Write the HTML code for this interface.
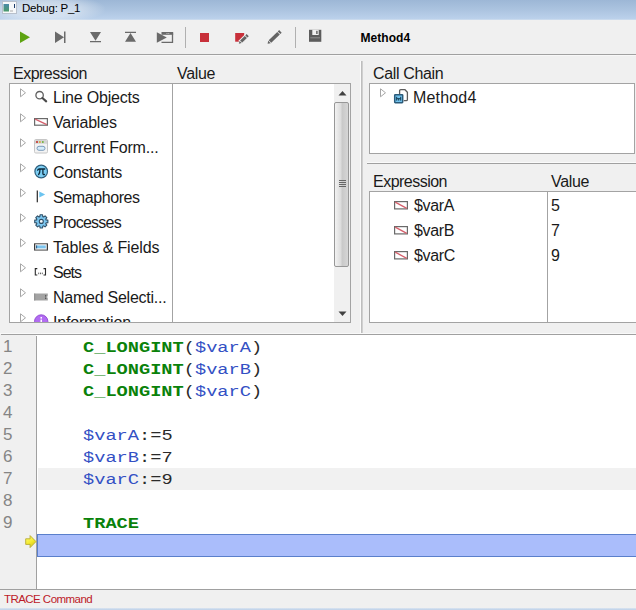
<!DOCTYPE html>
<html><head><meta charset="utf-8">
<style>
*{box-sizing:border-box;margin:0;padding:0}
html,body{width:636px;height:610px;overflow:hidden;background:#f0f0f0;font-family:"Liberation Sans",sans-serif;color:#1a1a1a}
.abs{position:absolute}
#title{left:0;top:0;width:636px;height:20px;background:linear-gradient(#9db7d6,#acc4e0 50%,#bbd1eb 94%,#d4e0ee)}
#title .t{left:22px;top:2px;font-size:11.500px;letter-spacing:-0.250px;color:#000}
#tb{left:0;top:20px;width:636px;height:34px;background:#f0f0f0}
.lbl{font-size:16px;letter-spacing:-0.350px;color:#1a1a1a;white-space:nowrap;line-height:18px}
.box{background:#fff;border:1px solid #a3a3a3}
.row{position:absolute;left:0;height:25px;font-size:16px;letter-spacing:-0.200px;white-space:nowrap;width:162px}
.row .tx{position:absolute;left:43px;top:5px;line-height:18px}
.tri{position:absolute;left:10px;top:4px}
.ic{position:absolute}
.code{font-family:"Liberation Mono",monospace;font-size:18.670px;white-space:pre;position:absolute;left:83px;height:22px;line-height:22px;color:#2a2a2a;transform:scaleY(0.82);transform-origin:0 16px}
.ln{font-size:17px;position:absolute;left:3px;color:#858585;height:22px;line-height:22px}
.k{color:#0a820a;font-weight:bold}
.v{color:#3350c4}
</style></head><body>
<div class="abs" id="title" style="overflow:hidden">
  <div class="abs" style="left:-20px;top:-6px;width:125px;height:30px;background:radial-gradient(ellipse at center,rgba(255,255,255,0.550) 0%,rgba(255,255,255,0.400) 40%,rgba(255,255,255,0) 72%)"></div>
  <svg class="abs" style="left:2px;top:1px" width="15" height="13" viewBox="0 0 15 13"><defs><linearGradient id="tg" x1="0" y1="0" x2="0" y2="1"><stop offset="0" stop-color="#4a8aa8"/><stop offset="1" stop-color="#4a9a6a"/></linearGradient></defs><rect x="0.500" y="0.500" width="14" height="12" fill="#f6f8fa" stroke="#b8c0cc"/><rect x="1.500" y="3" width="5.500" height="7.500" fill="url(#tg)"/><rect x="8" y="9.500" width="3" height="1" fill="#aaa"/><rect x="12" y="3" width="1" height="4" fill="#1a3a6a"/></svg>
  <div class="abs t">Debug: P_1</div>
</div>
<div class="abs" id="tb">
  <svg class="abs" style="left:0;top:-1px" width="636" height="35" viewBox="0 19 636 35">
    <path d="M20 31.500 L30 37.200 L20 43 Z" fill="#5ea311"/>
    <path d="M55 31.500 L64 37.200 L55 43 Z M64 31.500h1.500v11.500h-1.500z" fill="#6a6a6a"/>
    <path d="M90 32 h11 l-5.500 8.700z M90 41h11v1.200h-11z" fill="#6a6a6a"/>
    <path d="M125 31.800h11v1.200h-11z M125 41.700h11l-5.500 -8.800z" fill="#6a6a6a"/>
    <path d="M161.500 42.400h11v-9" fill="none" stroke="#6a6a6a" stroke-width="1.300"/>
    <rect x="161.500" y="32" width="11.700" height="2.800" fill="#6a6a6a"/><rect x="166.500" y="33" width="1" height="0.800" fill="#ddd"/><rect x="168.300" y="33" width="1" height="0.800" fill="#ddd"/>
    <path d="M156.800 32.200 L166.800 37.400 L156.800 42.700 Z" fill="#6a6a6a"/>
    <rect x="185" y="27" width="1" height="21" fill="#b0b0b0"/>
    <rect x="200" y="33" width="9" height="9" fill="#c8303a"/>
    <rect x="235.200" y="33" width="9" height="8.700" fill="#c8303a"/>
    <g transform="translate(238.8,43.8) rotate(-44)"><path d="M-0.500 0 L2.600 -2.45 H13.200000000000001 V2.45 H2.600 Z" fill="#f0f0f0"/><path d="M0 0 L2.600 -1.55 L2.600 1.55 Z M3.300 -1.55 H9.8 V1.55 H3.300 Z M10.5 -1.55 H12.4 V1.55 H10.5 Z" fill="#646464"/></g>
    <g transform="translate(267.6,43.8) rotate(-44)"><path d="M0 0 L2.600 -1.85 L2.600 1.85 Z M3.300 -1.85 H15.200000000000001 V1.85 H3.300 Z M15.9 -1.85 H17.8 V1.85 H15.9 Z" fill="#646464"/></g>
    <rect x="295" y="27" width="1" height="21" fill="#b0b0b0"/>
    <path d="M309 29.800h12.300v12h-12.300z" fill="#5c5c5c"/>
    <rect x="312.300" y="29.800" width="6.400" height="5.200" fill="#f0f0f0"/>
    <rect x="316.200" y="30.800" width="1.400" height="3.200" fill="#5c5c5c"/>
    <rect x="310.300" y="37.300" width="9.700" height="1" fill="#8e8e8e"/>
  </svg>
  <div class="abs" style="left:360.500px;top:11px;font-size:12px;font-weight:bold;color:#000;letter-spacing:0.050px">Method4</div>
</div>
<div class="abs" style="left:0;top:54px;width:636px;height:1px;background:#a0a0a0"></div>
<div class="abs" style="left:0;top:55px;width:636px;height:1px;background:#f8f8f8"></div>

<!-- left panel -->
<div class="abs lbl" style="left:13px;top:65px;letter-spacing:-0.520px">Expression</div>
<div class="abs lbl" style="left:177px;top:65px">Value</div>
<div class="abs box" style="left:9px;top:83px;width:342px;height:240px;overflow:hidden">
  <div class="abs" style="left:162px;top:0;width:1px;height:240px;background:#a3a3a3"></div>
  <div class="row" style="top:0px"><svg class="tri" width="7" height="10" viewBox="0 0 7 10"><path d="M0.500 0.800 L5.500 4.800 L0.500 8.800Z" fill="#fff" stroke="#a6a6a6" stroke-width="1"/></svg><svg class="ic" style="left:24px;top:5.5px" width="14" height="14" viewBox="0 0 14 14"><circle cx="5.600" cy="5.200" r="3.700" fill="#fff" stroke="#606060" stroke-width="1.300"/><path d="M8.400 8 L12.200 11.400" stroke="#4a4a4a" stroke-width="2.100" stroke-linecap="round"/></svg><span class="tx" style="letter-spacing:-0.2px">Line Objects</span></div>
  <div class="row" style="top:25px"><svg class="tri" width="7" height="10" viewBox="0 0 7 10"><path d="M0.500 0.800 L5.500 4.800 L0.500 8.800Z" fill="#fff" stroke="#a6a6a6" stroke-width="1"/></svg><svg class="ic" style="left:24px;top:9px" width="14" height="8" viewBox="0 0 14 8"><rect x="0.600" y="0.600" width="12.800" height="6.600" fill="#fff" stroke="#6a6a6a" stroke-width="1.200"/><path d="M1.200 1.200 L12.800 6.600" stroke="#d4606c" stroke-width="1.300"/></svg><span class="tx" style="letter-spacing:-0.2px">Variables</span></div>
  <div class="row" style="top:50px"><svg class="tri" width="7" height="10" viewBox="0 0 7 10"><path d="M0.500 0.800 L5.500 4.800 L0.500 8.800Z" fill="#fff" stroke="#a6a6a6" stroke-width="1"/></svg><svg class="ic" style="left:24px;top:5px" width="14" height="15" viewBox="0 0 14 15"><rect x="0.500" y="0.500" width="13" height="13.500" rx="1.300" fill="#f3f3f3" stroke="#c6c6c6"/><path d="M1 4.800v-2.800q0 -1 1 -1h10q1 0 1 1v2.800z" fill="#d4d4d4"/><circle cx="3" cy="3" r="1" fill="#c42a22"/><circle cx="5.900" cy="3" r="1" fill="#d6a63a"/><circle cx="8.800" cy="3" r="1" fill="#72b23c"/><rect x="3" y="7.300" width="8" height="4" rx="2" fill="#d6ecf9" stroke="#7b9bbb" stroke-width="1"/></svg><span class="tx" style="letter-spacing:-0.2px">Current Form...</span></div>
  <div class="row" style="top:75px"><svg class="tri" width="7" height="10" viewBox="0 0 7 10"><path d="M0.500 0.800 L5.500 4.800 L0.500 8.800Z" fill="#fff" stroke="#a6a6a6" stroke-width="1"/></svg><svg class="ic" style="left:24px;top:5px" width="15" height="15" viewBox="0 0 15 15"><circle cx="7.200" cy="7.500" r="6.300" fill="#7ccef4" stroke="#2f5f7d" stroke-width="1.200"/><path d="M3.600 6.200q0.500 -1.200 1.600 -1.200h5.600M6 5.200q0 3.600 -1.400 5.400M8.900 5.200v4.300q0 1.300 1.500 1" fill="none" stroke="#0c2a3c" stroke-width="1.300" stroke-linecap="round"/></svg><span class="tx" style="letter-spacing:-0.35px">Constants</span></div>
  <div class="row" style="top:100px"><svg class="tri" width="7" height="10" viewBox="0 0 7 10"><path d="M0.500 0.800 L5.500 4.800 L0.500 8.800Z" fill="#fff" stroke="#a6a6a6" stroke-width="1"/></svg><svg class="ic" style="left:26px;top:6px" width="10" height="13" viewBox="0 0 10 13"><rect x="0.700" y="0.500" width="1.200" height="11.800" fill="#2a2a2a"/><path d="M3.300 1.600 L9.200 4.500 L3.300 7.400 Z" fill="#6cc4f0"/></svg><span class="tx" style="letter-spacing:-0.4px">Semaphores</span></div>
  <div class="row" style="top:125px"><svg class="tri" width="7" height="10" viewBox="0 0 7 10"><path d="M0.500 0.800 L5.500 4.800 L0.500 8.800Z" fill="#fff" stroke="#a6a6a6" stroke-width="1"/></svg><svg class="ic" style="left:24px;top:5px" width="15" height="15" viewBox="0 0 15 15"><g transform="translate(7.300,7.400)"><path d="M4.78 -1.46 L6.58 -1.26 L6.58 1.26 L4.78 1.46 L4.42 2.35 L5.54 3.77 L3.77 5.54 L2.35 4.42 L1.46 4.78 L1.26 6.58 L-1.26 6.58 L-1.46 4.78 L-2.35 4.42 L-3.77 5.54 L-5.54 3.77 L-4.42 2.35 L-4.78 1.46 L-6.58 1.26 L-6.58 -1.26 L-4.78 -1.46 L-4.42 -2.35 L-5.54 -3.77 L-3.77 -5.54 L-2.35 -4.42 L-1.46 -4.78 L-1.26 -6.58 L1.26 -6.58 L1.46 -4.78 L2.35 -4.42 L3.77 -5.54 L5.54 -3.77 L4.42 -2.35Z" fill="#7cc6ef" stroke="#2f5068" stroke-width="1.100" stroke-linejoin="round"/><circle r="2" fill="#f2f8fc" stroke="#2f5068" stroke-width="1.100"/></g></svg><span class="tx" style="letter-spacing:-0.75px">Processes</span></div>
  <div class="row" style="top:150px"><svg class="tri" width="7" height="10" viewBox="0 0 7 10"><path d="M0.500 0.800 L5.500 4.800 L0.500 8.800Z" fill="#fff" stroke="#a6a6a6" stroke-width="1"/></svg><svg class="ic" style="left:24px;top:9px" width="14" height="8" viewBox="0 0 14 8"><rect x="0.700" y="0.700" width="12.600" height="6.400" fill="#fff" stroke="#7a7a7a" stroke-width="1.400"/><rect x="0" y="1" width="1" height="5.800" fill="#3a3a3a"/><rect x="13" y="1" width="1" height="5.800" fill="#3a3a3a"/><rect x="2.200" y="2.400" width="9.600" height="3" fill="#7cc4ee"/><rect x="2.200" y="2.400" width="0.900" height="3" fill="#1a4a78"/></svg><span class="tx" style="letter-spacing:-0.15px">Tables &amp; Fields</span></div>
  <div class="row" style="top:175px"><svg class="tri" width="7" height="10" viewBox="0 0 7 10"><path d="M0.500 0.800 L5.500 4.800 L0.500 8.800Z" fill="#fff" stroke="#a6a6a6" stroke-width="1"/></svg><svg class="ic" style="left:24px;top:9px" width="13" height="8" viewBox="0 0 13 8"><path d="M3.300 0.600h-2v6.400h2M9.500 0.600h2v6.400h-2" fill="none" stroke="#2a2a2a" stroke-width="1.100"/><rect x="4.200" y="4.600" width="1" height="1.600" fill="#666"/><rect x="6" y="4.600" width="1" height="1.600" fill="#666"/><rect x="7.800" y="4.600" width="1" height="1.600" fill="#666"/></svg><span class="tx" style="letter-spacing:-1.0px">Sets</span></div>
  <div class="row" style="top:200px"><svg class="tri" width="7" height="10" viewBox="0 0 7 10"><path d="M0.500 0.800 L5.500 4.800 L0.500 8.800Z" fill="#fff" stroke="#a6a6a6" stroke-width="1"/></svg><svg class="ic" style="left:24px;top:8px" width="14" height="10" viewBox="0 0 14 10"><rect x="0.200" y="1.500" width="13.600" height="7" fill="#a3a3a3"/><rect x="0.200" y="1.500" width="1" height="7" fill="#8c8c8c"/><rect x="11" y="3.300" width="1.300" height="1.200" fill="#444"/><rect x="11" y="5.600" width="1.300" height="1.200" fill="#444"/><rect x="12.800" y="4.200" width="1" height="1.700" fill="#e8e8e8"/></svg><span class="tx" style="letter-spacing:-0.25px">Named Selecti...</span></div>
  <div class="row" style="top:225px"><svg class="tri" width="7" height="10" viewBox="0 0 7 10"><path d="M0.500 0.800 L5.500 4.800 L0.500 8.800Z" fill="#fff" stroke="#a6a6a6" stroke-width="1"/></svg><svg class="ic" style="left:24px;top:5px" width="15" height="15" viewBox="0 0 15 15"><circle cx="7.200" cy="7.500" r="6.700" fill="#b26cf2" stroke="#8f48d0" stroke-width="0.900"/><rect x="6.500" y="3" width="1.500" height="1.600" fill="#fff"/><rect x="6.500" y="5.600" width="1.500" height="6" fill="#fff"/></svg><span class="tx" style="letter-spacing:-0.2px">Information</span></div>
  <div class="abs" style="left:324px;top:0;width:16px;height:238px;background:#f0f0f0"></div>
  <div class="abs" style="left:324px;top:18px;width:15px;height:165px;border:1px solid #979797;border-radius:2px;background:linear-gradient(90deg,#f2f2f2,#dcdcdc 45%,#c9c9c9 55%,#d6d6d6)"></div>
  <svg class="abs" style="left:324px;top:0" width="16" height="238" viewBox="0 0 16 238"><path d="M4.500 11.500 L8.500 7 L12.500 11.500Z" fill="#404040"/><path d="M4.500 227.500 L8.500 232 L12.500 227.500Z" fill="#404040"/><path d="M5 96.500h7M5 98.500h7M5 100.500h7M5 102.500h7" stroke="#666" stroke-width="1"/></svg>
</div>

<!-- splitters -->
<svg class="abs" style="left:358px;top:61px" width="6" height="272" viewBox="358 61 6 272"><rect x="360.300" y="61" width="1.050" height="272" fill="#fff"/><rect x="361.350" y="61" width="1.050" height="272" fill="#a0a0a0"/></svg>
<!-- right top -->
<div class="abs lbl" style="left:373px;top:65px">Call Chain</div>
<div class="abs box" style="left:369px;top:83px;width:266px;height:71px"></div>
<div class="abs lbl" style="left:413px;top:89px;letter-spacing:0.180px">Method4</div>
<div class="abs" style="left:367px;top:163px;width:269px;height:1px;background:#a0a0a0"></div>
<div class="abs" style="left:367px;top:162px;width:269px;height:1px;background:#fafafa"></div>
<div class="abs lbl" style="left:373px;top:173px;letter-spacing:-0.520px">Expression</div>
<div class="abs lbl" style="left:551px;top:173px">Value</div>
<div class="abs box" style="left:369px;top:191px;width:270px;height:132px"></div>
<div class="abs" style="left:547px;top:191px;width:1px;height:132px;background:#a3a3a3"></div>
<div class="abs lbl" style="left:414px;top:197px">$varA</div>
<div class="abs lbl" style="left:414px;top:222px">$varB</div>
<div class="abs lbl" style="left:414px;top:247px">$varC</div>
<div class="abs lbl" style="left:551px;top:197px">5</div>
<div class="abs lbl" style="left:551px;top:222px">7</div>
<div class="abs lbl" style="left:551px;top:247px">9</div>

<svg class="abs" style="left:380px;top:88px" width="7" height="10" viewBox="0 0 7 10"><path d="M0.500 0.800 L5.500 4.800 L0.500 8.800Z" fill="#fff" stroke="#a6a6a6" stroke-width="1"/></svg>
<svg class="abs" style="left:393px;top:89px" width="16" height="15" viewBox="0 0 16 15"><path d="M6.600 5.500 V1.900 Q6.600 0.700 7.800 0.700 H12 L14.400 3.200 V10.400 Q14.400 11.600 13.200 11.600 H10.800" fill="#fff" stroke="#5c5c5c" stroke-width="1.300"/><rect x="1.700" y="5.700" width="8" height="8" rx="0.600" fill="#72c2ec" stroke="#2b5b7a" stroke-width="1.500"/><path d="M3.700 7.800v3.800M3.700 9.700h4M7.700 7.800v3.800M5.700 9.700v1.900" fill="none" stroke="#143a52" stroke-width="1"/></svg>
<svg class="abs" style="left:394px;top:201px" width="14" height="9" viewBox="0 0 14 9"><rect x="0.600" y="0.600" width="12.800" height="7.300" fill="#fff" stroke="#6a6a6a" stroke-width="1.200"/><path d="M1.200 1.200 L12.800 7.300" stroke="#d4606c" stroke-width="1.300"/></svg>
<svg class="abs" style="left:394px;top:226px" width="14" height="9" viewBox="0 0 14 9"><rect x="0.600" y="0.600" width="12.800" height="7.300" fill="#fff" stroke="#6a6a6a" stroke-width="1.200"/><path d="M1.200 1.200 L12.800 7.300" stroke="#d4606c" stroke-width="1.300"/></svg>
<svg class="abs" style="left:394px;top:251px" width="14" height="9" viewBox="0 0 14 9"><rect x="0.600" y="0.600" width="12.800" height="7.300" fill="#fff" stroke="#6a6a6a" stroke-width="1.200"/><path d="M1.200 1.200 L12.800 7.300" stroke="#d4606c" stroke-width="1.300"/></svg>
<!-- code -->
<div class="abs" style="left:0;top:333px;width:636px;height:1px;background:#f9f9f9"></div>
<div class="abs" style="left:1px;top:334px;width:635px;height:1px;background:#a0a0a0"></div>
<div class="abs" style="left:0;top:335px;width:636px;height:254px;background:#fff"></div>
<div class="abs" style="left:0;top:335px;width:36px;height:254px;background:#f0f0f0"></div>
<div class="abs" style="left:36px;top:336px;width:1px;height:253px;background:#a0a0a0"></div>
<div class="abs" style="left:38px;top:468px;width:598px;height:22px;background:#f1f1f1"></div>
<div class="abs" style="left:37px;top:534px;width:602px;height:23px;background:#aabdfb;border:1px solid #5a7fcb"></div>
<div class="ln" style="top:336px">1</div><div class="code" style="top:335.5px"><span class="k">C_LONGINT</span>(<span class="v">$varA</span>)</div>
<div class="ln" style="top:358px">2</div><div class="code" style="top:357.5px"><span class="k">C_LONGINT</span>(<span class="v">$varB</span>)</div>
<div class="ln" style="top:380px">3</div><div class="code" style="top:379.5px"><span class="k">C_LONGINT</span>(<span class="v">$varC</span>)</div>
<div class="ln" style="top:402px">4</div>
<div class="ln" style="top:424px">5</div><div class="code" style="top:423.5px"><span class="v">$varA</span>:=5</div>
<div class="ln" style="top:446px">6</div><div class="code" style="top:445.5px"><span class="v">$varB</span>:=7</div>
<div class="ln" style="top:468px">7</div><div class="code" style="top:467.5px"><span class="v">$varC</span>:=9</div>
<div class="ln" style="top:490px">8</div>
<div class="ln" style="top:512px">9</div><div class="code" style="top:511.5px"><span class="k">TRACE</span></div>
<svg class="abs" style="left:24px;top:535px" width="13" height="14" viewBox="0 0 13 14"><defs><linearGradient id="ag" x1="0" y1="0" x2="0.600" y2="1"><stop offset="0" stop-color="#ffff7a"/><stop offset="0.600" stop-color="#f4ea30"/><stop offset="1" stop-color="#d8c818"/></linearGradient></defs><path d="M1.700 3.800h4.400v-3.200l5.900 6l-5.900 6v-3.200h-4.400z" fill="url(#ag)" stroke="#b8ab30" stroke-width="0.900" stroke-linejoin="round"/></svg>
<div class="abs" style="left:0;top:589px;width:636px;height:1px;background:#a0a0a0"></div>
<div class="abs" style="left:4px;top:593px;font-size:11.500px;letter-spacing:-0.550px;color:#bc1a28">TRACE Command</div>
<div class="abs" style="left:0;top:608px;width:636px;height:2px;background:linear-gradient(#dbe5f1,#bcd0e8)"></div>
</body></html>
